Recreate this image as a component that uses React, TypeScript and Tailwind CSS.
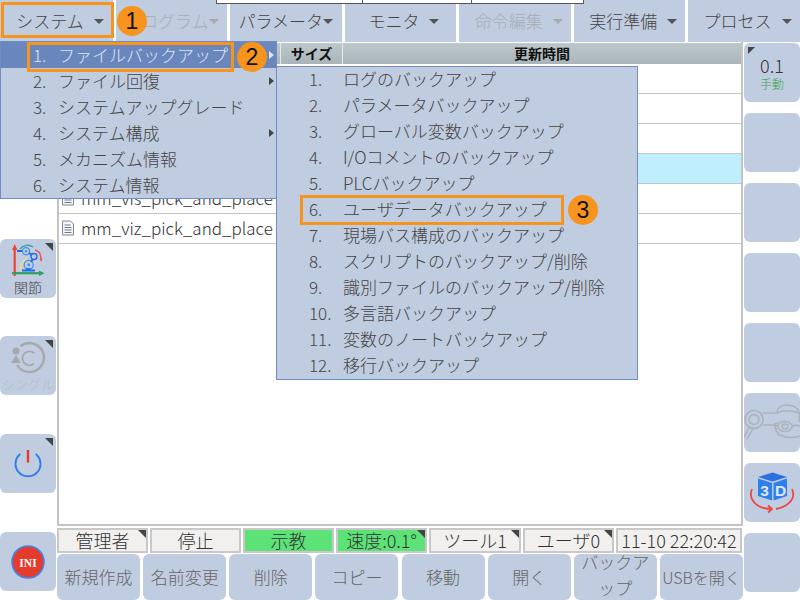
import React from 'react';

const FONT = '"Noto Sans CJK JP", "Noto Sans", sans-serif';

const topMenus = [
  { label: 'システム', width: 'w-[113px]', disabled: false },
  { label: 'プログラム', width: 'w-[111px]', disabled: true, tight: true },
  { label: 'パラメータ', width: 'w-[112px]', disabled: false, tight: true },
  { label: 'モニタ', width: 'w-[112px]', disabled: false },
  { label: '命令編集', width: 'w-[112px]', disabled: true },
  { label: '実行準備', width: 'w-[111px]', disabled: false },
  { label: 'プロセス', width: 'w-[112px]', disabled: false },
];

const systemItems = [
  { n: '1.', label: 'ファイルバックアップ', sub: true, active: true },
  { n: '2.', label: 'ファイル回復', sub: true },
  { n: '3.', label: 'システムアップグレード' },
  { n: '4.', label: 'システム構成', sub: true },
  { n: '5.', label: 'メカニズム情報' },
  { n: '6.', label: 'システム情報' },
];

const backupItems = [
  'ログのバックアップ',
  'パラメータバックアップ',
  'グローバル変数バックアップ',
  'I/Oコメントのバックアップ',
  'PLCバックアップ',
  'ユーザデータバックアップ',
  '現場バス構成のバックアップ',
  'スクリプトのバックアップ/削除',
  '識別ファイルのバックアップ/削除',
  '多言語バックアップ',
  '変数のノートバックアップ',
  '移行バックアップ',
];

const Corner = ({ className = 'right-[3px] top-[4px]' }: { className?: string }) => (
  <span className={`absolute h-0 w-0 border-l-[8px] border-t-[8px] border-l-transparent border-t-[#444] ${className}`} />
);

const Caret = ({ light }: { light?: boolean }) => (
  <span className={`inline-block h-0 w-0 border-x-[5px] border-t-[5px] border-x-transparent ${light ? 'border-t-[#aaa]' : 'border-t-[#555]'}`} />
);

const SideButton = ({ children, corner, className = '' }: { children?: React.ReactNode; corner?: boolean; className?: string }) => (
  <div className={`relative flex h-[59px] w-[56px] shrink-0 flex-col items-center justify-center rounded-[6px] bg-[#c0cce0] ${className}`}>
    {corner && <Corner />}
    {children}
  </div>
);

const Badge = ({ n, className }: { n: number; className: string }) => (
  <span className={`absolute flex h-[30px] w-[30px] items-center justify-center rounded-full bg-[#f7941d] text-[23px] font-normal text-[#111] ${className}`} style={{ fontFamily: '"Liberation Sans", sans-serif' }}>
    {n}
  </span>
);

const JointIcon = () => (
  <svg width="34" height="36" viewBox="0 0 34 36" fill="none">
    <path d="M3.700 33V5" stroke="#f04438" strokeWidth="2.2" />
    <path d="M1 7l2.700-6 2.700 6z" fill="#f04438" />
    <path d="M1 30.200h28" stroke="#2f9e63" strokeWidth="2.2" />
    <path d="M28 27.500l5.500 2.700-5.500 2.700z" fill="#2f9e63" />
    <path d="M9 28c.5-6 3-10 6-12" stroke="#f3d98b" strokeWidth="1.800" />
    <path d="M9 6c3-4 9-5 13-2" stroke="#3aa593" strokeWidth="1.300" />
    <path d="M24 7c4 1 6 4 6 9" stroke="#ef5350" strokeWidth="1.400" />
    <path d="M28.500 15.500h3l-1.500 3.500z" fill="#ef5350" />
    <circle cx="15" cy="8.200" r="3.500" stroke="#4a90e8" strokeWidth="1.300" />
    <circle cx="15" cy="8.200" r="1.200" fill="#4a90e8" />
    <circle cx="23" cy="13.500" r="3" stroke="#1d6fe8" strokeWidth="1.400" />
    <circle cx="17.700" cy="21.800" r="4.500" stroke="#4a90e8" strokeWidth="1.300" />
    <circle cx="17.700" cy="21.800" r="1.500" fill="#4a90e8" />
    <path d="M6 8h5M18 10l3 2M22 16l-2 3" stroke="#1d6fe8" strokeWidth="2" />
    <path d="M11 27.500h13" stroke="#1d6fe8" strokeWidth="2" />
    <path d="M15.500 25h4v2h-4z" fill="#1d6fe8" />
  </svg>
);

const SingleIcon = () => (
  <svg width="36" height="36" viewBox="0 0 36 36" fill="none">
    <path d="M10.700 5A14.500 14.500 0 1 1 7 24" stroke="#a8a8a8" strokeWidth="2.400" />
    <path d="M1 22h10l-5-8z" fill="#a8a8a8" />
    <circle cx="6" cy="10" r="3.500" fill="#a8a8a8" />
    <path d="M24 12a7 7 0 1 0 0 10.600" stroke="#a8a8a8" strokeWidth="1.800" />
  </svg>
);

const PowerIcon = () => (
  <svg width="28" height="30" viewBox="0 0 28 30" fill="none">
    <path d="M6.300 5A12.500 12.500 0 1 0 21.700 5" stroke="#2f80ed" strokeWidth="2" />
    <path d="M14 1v12.500" stroke="#e53935" strokeWidth="2.400" />
  </svg>
);

const IniIcon = () => (
  <svg width="34" height="34" viewBox="0 0 34 34">
    <circle cx="17" cy="17" r="16" fill="#e53b2c" stroke="#3f86ee" strokeWidth="1.600" />
    <text x="17" y="21.500" textAnchor="middle" fontSize="11.500" fontWeight="700" fill="#fff" fontFamily='"Liberation Serif", serif'>INI</text>
  </svg>
);

const RobotHandIcon = () => (
  <svg width="56" height="48" viewBox="0 0 56 48" fill="none" stroke="#acb2bb" strokeWidth="1.500">
    <circle cx="10" cy="20.500" r="9" />
    <circle cx="10" cy="20.500" r="5" />
    <path d="M5 29L0 38M9 29.500L3 40M18 14h16M18.500 26h14" />
    <path d="M33 14c0-5 4-8 10-8 6 0 11 3 12 7 1 3 0 7 0 10" />
    <path d="M34 14c3-3 14-3 20 0" />
    <ellipse cx="41" cy="27.500" rx="7" ry="5" />
    <ellipse cx="41" cy="27.500" rx="3" ry="2.500" />
    <path d="M34 24l-3 1c-1 1 0 2 1 2l2-.5M32 27c-2 1-1 3 1 3M33 30c-2 1-1 3 1 3M34 33c-1 2 1 3 2 3" />
    <path d="M36 36c6 3 14 3 20 1M48 27c3-1 6-1 8 0" />
  </svg>
);

const CubeIcon = () => (
  <svg width="46" height="42" viewBox="0 0 46 42">
    <path d="M23.500.5L38 5l-14.500 4.500L9 5z" fill="#2b6fe0" />
    <path d="M9 6.500l14 4.500v17.500L9 24z" fill="#2f80ed" />
    <path d="M24.500 11L38 6.500V24l-13.500 4.500z" fill="#2f80ed" />
    <text x="15.500" y="23.500" textAnchor="middle" fontSize="15.500" fontWeight="700" fill="#dfe9fb" fontFamily='"Liberation Sans", sans-serif'>3</text>
    <text x="31.500" y="23.500" textAnchor="middle" fontSize="15.500" fontWeight="700" fill="#dfe9fb" fontFamily='"Liberation Sans", sans-serif'>D</text>
    <path d="M3 17c-4 9 3 19 18 20" fill="none" stroke="#ef4444" strokeWidth="1.800" />
    <path d="M19 33.500l4 3.500-4 3.500" fill="none" stroke="#ef4444" strokeWidth="1.800" />
    <path d="M43 17c4 9-2 17-16 20" fill="none" stroke="#ef4444" strokeWidth="1.800" />
  </svg>
);

const FileIcon = () => (
  <svg width="14" height="16" viewBox="0 0 14 16" fill="none" className="shrink-0">
    <path d="M1.500 1h8l3 3v11h-11z" fill="#f4f6f9" stroke="#7d8794" />
    <path d="M3.500 5h6M3.500 7.500h7M3.500 10h7M3.500 12.500h7" stroke="#6f7a88" />
  </svg>
);

const statusCells = [
  { label: '管理者', width: 'w-[91px]', corner: true },
  { label: '停止', width: 'w-[91px]' },
  { label: '示教', width: 'w-[91px]', green: true },
  { label: '速度:0.1°', width: 'w-[91px]', green: true, corner: true },
  { label: 'ツール1', width: 'w-[92px]', corner: true },
  { label: 'ユーザ0', width: 'w-[91px]', corner: true },
  { label: '11-10 22:20:42', width: 'w-[126px]' },
];

const actions = ['新規作成', '名前変更', '削除', 'コピー', '移動', '開く', 'バックアップ', 'USBを開く'];

export default function App() {
  return (
    <div className="relative flex h-[600px] w-[800px] flex-col overflow-hidden bg-white font-light" style={{ fontFamily: FONT }}>
      {/* top menu bar */}
      <div className="flex h-[42px] shrink-0 gap-[3px]">
        {topMenus.map(menu => (
          <div key={menu.label} className={`flex ${menu.width} items-center justify-center bg-[#c0cce0] text-[17px] ${menu.tight ? 'gap-0' : 'gap-[10px] pl-[7px]'} ${menu.disabled ? 'text-[#a9adb5]' : 'text-[#444]'}`}>
            <span>{menu.label}</span>
            <Caret light={menu.disabled} />
          </div>
        ))}
      </div>

      <div className="flex min-h-0 flex-1">
        {/* left tool column */}
        <div className="flex w-[57px] shrink-0 flex-col gap-[39px] pt-[197px]">
          <SideButton corner className="mb-[-1px]">
            <JointIcon />
            <span className="text-[14px] leading-[16px] text-[#444]">関節</span>
          </SideButton>
          <SideButton corner>
            <SingleIcon />
            <span className="text-[13px] leading-[14px] text-[#b6bcc7]">シングル</span>
          </SideButton>
          <SideButton corner>
            <PowerIcon />
          </SideButton>
          <SideButton>
            <IniIcon />
          </SideButton>
        </div>

        {/* file list, status and actions */}
        <div className="flex w-[686px] shrink-0 flex-col">
          <div className="h-[486px] border-x-2 border-b-2 border-[#c4c4c4] pt-[1px]">
            <div className="flex h-[21px] bg-gradient-to-b from-[#bcc8cc] to-[#a9b5b9] text-[14px] font-bold text-[#111]">
              <div className="w-[222px] border-r border-[#e5e9ea]" />
              <div className="flex w-[62px] items-center justify-center border-r border-[#e5e9ea]">サイズ</div>
              <div className="flex flex-1 items-center justify-center">更新時間</div>
            </div>
            {['', '', '', 'mm_selected', 'mm_vis_pick_and_place', 'mm_viz_pick_and_place'].map((name, i) => (
              <div key={i} className={`flex h-[30px] items-center gap-[6px] border-b border-[#c4c4c4] pb-[2px] pl-[2px] text-[17px] text-[#333] ${i === 3 ? 'bg-[#bfeeff]' : ''}`}>
                {name.includes('pick') && <FileIcon />}
                {name.includes('pick') && <span>{name}</span>}
              </div>
            ))}
          </div>

          <div className="mt-[2px] flex h-[25px] gap-[2px]">
            {statusCells.map(cell => (
              <div key={cell.label} className={`relative flex ${cell.width} items-center justify-center border-2 border-[#c8c8c8] text-[18px] text-[#333] ${cell.green ? 'bg-[#5ce276]' : 'bg-[#f1f0ee]'}`}>
                {cell.corner && <Corner className="right-0 top-0" />}
                {cell.label}
              </div>
            ))}
          </div>

          <div className="mt-[1px] flex justify-between">
            {actions.map(action => (
              <div key={action} className={`flex h-[46px] w-[83px] items-center justify-center rounded-[6px] bg-[#c0cce0] text-center text-[#666] ${action === 'USBを開く' ? 'text-[16px]' : 'text-[17px]'} ${action === 'バックアップ' ? 'break-all pb-[4px] leading-[26px]' : ''}`}>
                {action}
              </div>
            ))}
          </div>
        </div>

        {/* right tool column */}
        <div className="ml-[1px] flex w-[56px] shrink-0 flex-col gap-[11px] pt-[1px]">
          <SideButton>
            <span className="absolute left-[4px] top-[4px] h-0 w-0 border-r-[7px] border-t-[7px] border-r-transparent border-t-[#444]" />
            <span className="text-[18px] leading-[22px] text-[#333]">0.1</span>
            <span className="text-[12px] leading-[15px] text-[#3fa34d]">手動</span>
          </SideButton>
          <SideButton />
          <SideButton />
          <SideButton />
          <SideButton />
          <SideButton><RobotHandIcon /></SideButton>
          <SideButton><CubeIcon /></SideButton>
          <SideButton />
        </div>
      </div>

      {/* strip of the window behind the menu bar */}
      <div className="absolute left-[216px] top-0 flex h-[4px] w-[368px] border-x border-b border-[#555] bg-white">
        <div className="w-[146px] border-r border-[#555]" />
        <div className="w-[109px] border-r border-[#555]" />
      </div>

      {/* system dropdown */}
      <div className="absolute left-0 top-[41px] w-[277px] border border-[#6f8cc6] bg-[#c0cce0] text-[17px] text-[#444]">
        {systemItems.map(item => (
          <div key={item.n} className={`relative flex h-[26px] items-center pl-[32px] ${item.active ? 'bg-[#6a87bd] text-[#dfe6f2]' : ''}`}>
            <span className="w-[25px]">{item.n}</span>
            <span>{item.label}</span>
            {item.sub && <span className={`absolute right-[2px] h-0 w-0 border-y-[4px] border-l-[5px] border-y-transparent ${item.active ? 'border-l-[#dfe6f2]' : 'border-l-[#444]'}`} />}
          </div>
        ))}
      </div>

      {/* backup submenu */}
      <div className="absolute left-[276px] top-[66px] w-[362px] border border-[#6f8cc6] bg-[#c0cce0] text-[17px] text-[#444]">
        {backupItems.map((label, i) => (
          <div key={label} className="flex h-[26px] items-center pb-[2px] pl-[32px]">
            <span className="w-[34px]">{i + 1}.</span>
            <span>{label}</span>
          </div>
        ))}
      </div>

      {/* callouts */}
      <div className="absolute left-[1px] top-[2px] h-[36px] w-[113px] border-[3px] border-[#f7941d]" />
      <div className="absolute left-[27px] top-[42px] h-[30px] w-[207px] border-[3px] border-[#f7941d]" />
      <div className="absolute left-[300px] top-[195px] h-[30px] w-[264px] border-[3px] border-[#f7941d]" />
      <Badge n={1} className="left-[117px] top-[6px]" />
      <Badge n={2} className="left-[237px] top-[42px]" />
      <Badge n={3} className="left-[568px] top-[195px]" />
    </div>
  );
}
